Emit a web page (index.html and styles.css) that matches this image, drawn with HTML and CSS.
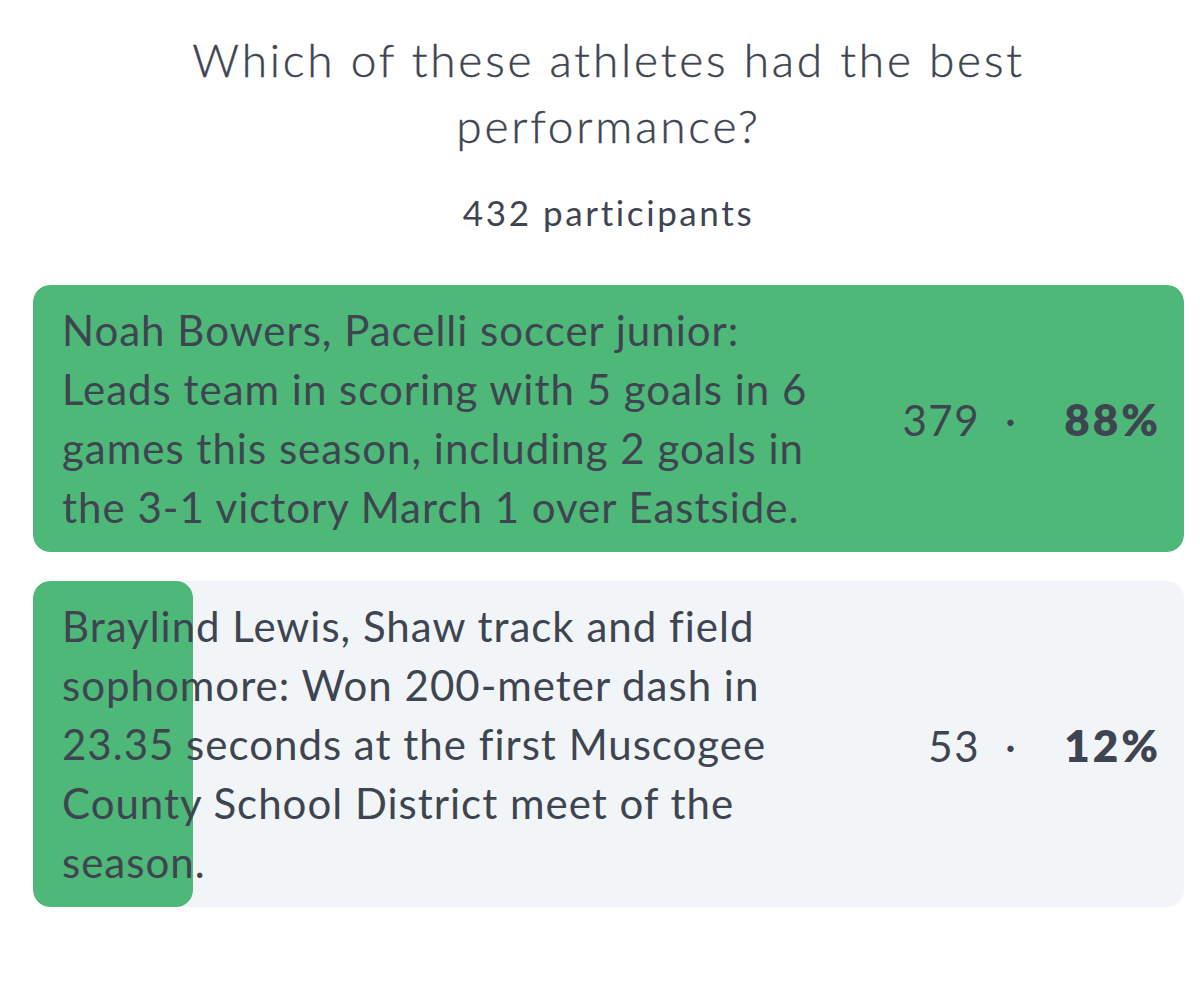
FILE: index.html
```html
<!DOCTYPE html>
<html>
<head>
<meta charset="utf-8">
<title>Poll results</title>
<link rel="stylesheet" href="styles.css">
</head>
<body>

<div class="Poll">
    <h1 class="PollTitle">Which of these athletes had the best performance?</h1>
    <p class="PollCount">432 participants</p>

    <div class="Answer">
        <div class="AnswerFill" style="width: 100%;"></div>
        <div class="AnswerText">Noah Bowers, Pacelli soccer junior: Leads team in scoring with 5 goals in 6 games this season, including 2 goals in the 3-1 victory March 1 over Eastside.</div>
        <div class="AnswerVotes">
            <span class="VoteCount">379</span>
            <span class="Dot">&middot;</span>
            <strong class="VotePercent">88%</strong>
        </div>
    </div>

    <div class="Answer">
        <div class="AnswerFill" style="width: 13.9%;"></div>
        <div class="AnswerText">Braylind Lewis, Shaw track and field sophomore: Won 200-meter dash in 23.35 seconds at the first Muscogee County School District meet of the season.</div>
        <div class="AnswerVotes">
            <span class="VoteCount">53</span>
            <span class="Dot">&middot;</span>
            <strong class="VotePercent">12%</strong>
        </div>
    </div>
</div>

</body>
</html>
```

FILE: styles.css
```css
	html, body {
		margin: 0;
		background: #ffffff;
		font-family: Lato, "Open Sans", sans-serif;
		color: #3e4551;
	}
	.Poll {
		padding: 27px 16px 0 33px;
	}
	.PollTitle {
		width: 900px;
		margin: 0 auto;
		font-size: 46px;
		font-weight: 300;
		line-height: 66px;
		letter-spacing: 2.8px;
		text-align: center;
		-webkit-text-stroke: 0.4px #3e4551;
	}
	.PollCount {
		margin: 33px 0 53px;
		font-size: 35px;
		line-height: 40px;
		letter-spacing: 2.6px;
		text-align: center;
	}
	.Answer {
		position: relative;
		display: flex;
		align-items: center;
		margin-bottom: 29px;
		padding: 16px 26px 15px 29px;
		border-radius: 17px;
		background: #f2f5f7;
		overflow: hidden;
	}
	.AnswerFill {
		position: absolute;
		top: 0;
		left: 0;
		bottom: 0;
		border-radius: 17px;
		background: #4db878;
	}
	.AnswerText {
		position: relative;
		flex: 1;
		max-width: 778px;
		font-size: 42px;
		line-height: 59px;
		letter-spacing: 1px;
	}
	.AnswerVotes {
		position: relative;
		display: flex;
		align-items: baseline;
		margin-left: auto;
		font-size: 42px;
		white-space: nowrap;
	}
	.VoteCount {
		letter-spacing: 1.5px;
	}
	.Dot {
		margin: 0 45px 0 25px;
	}
	.VotePercent {
		min-width: 100px;
		margin-right: -3px;
		font-size: 44px;
		font-weight: 800;
		letter-spacing: 3px;
		text-align: right;
	}
```
